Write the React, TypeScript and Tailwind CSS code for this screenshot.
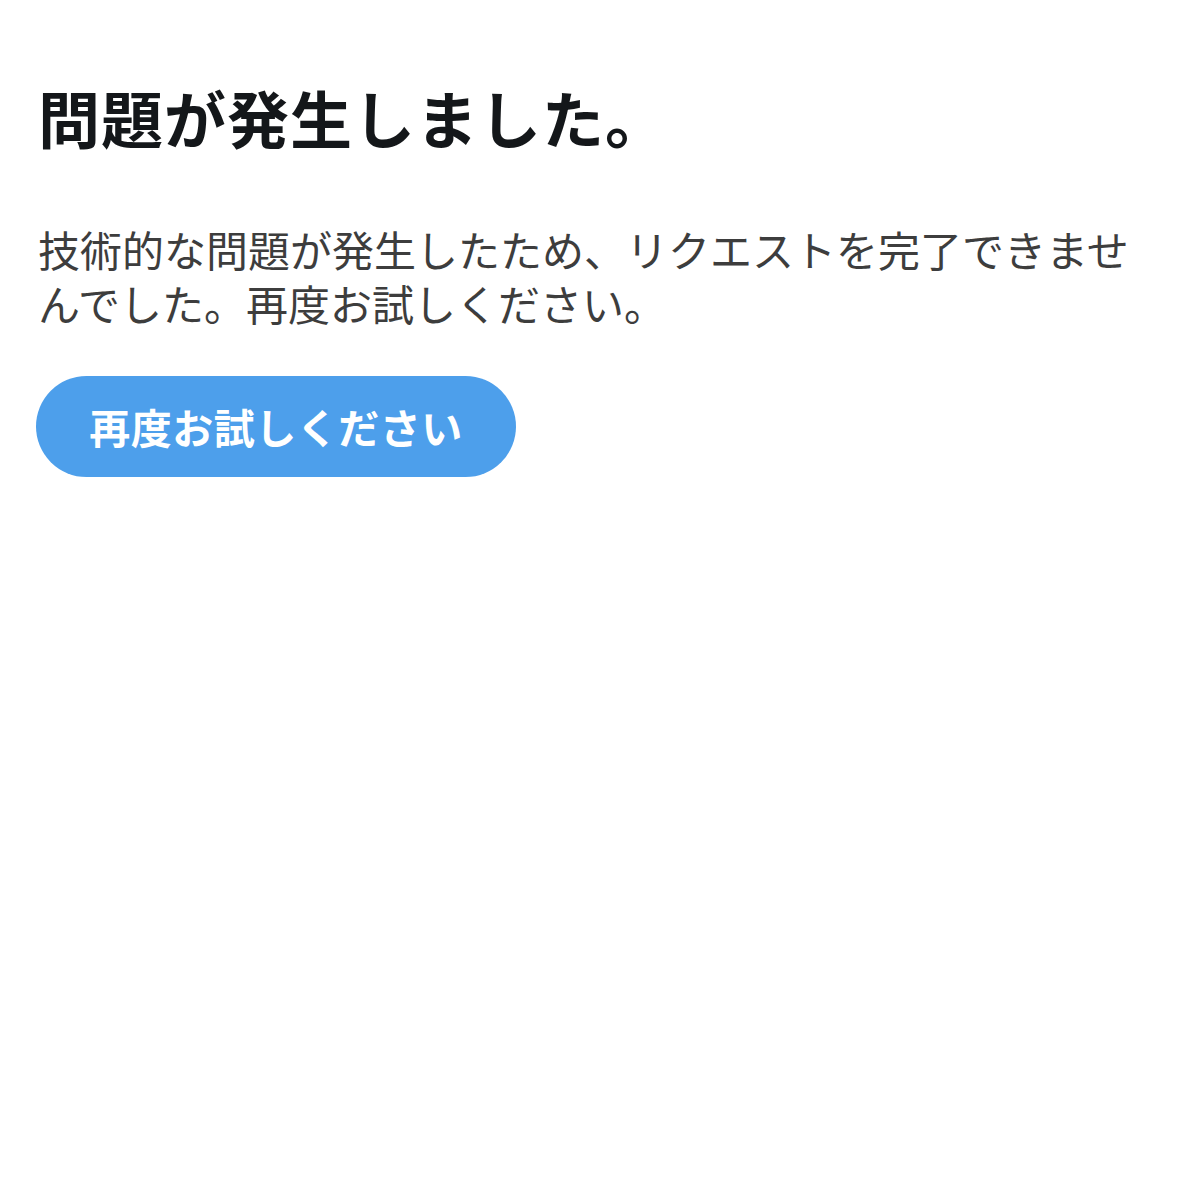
export default function App() {
  return (
    <div
      className="min-h-[1178px] bg-white px-[38px] pt-[80px]"
      style={{ fontFamily: '"Noto Sans CJK JP", "Noto Sans", sans-serif' }}
    >
      <h1 className="text-[62px] font-bold leading-[74px] tracking-[1px] text-[#14171a]">問題が発生しました。</h1>
      <p className="mt-[68px] text-[42px] leading-[54px] text-[#3d3d3d]">
        技術的な問題が発生したため、リクエストを完了できませんでした。再度お試しください。
      </p>
      <button className="ml-[-2px] mt-[46px] flex h-[101px] w-[480px] items-center justify-center rounded-full bg-[#4d9feb] text-[41px] font-semibold tracking-[0.5px] text-white">
        再度お試しください
      </button>
    </div>
  );
}
